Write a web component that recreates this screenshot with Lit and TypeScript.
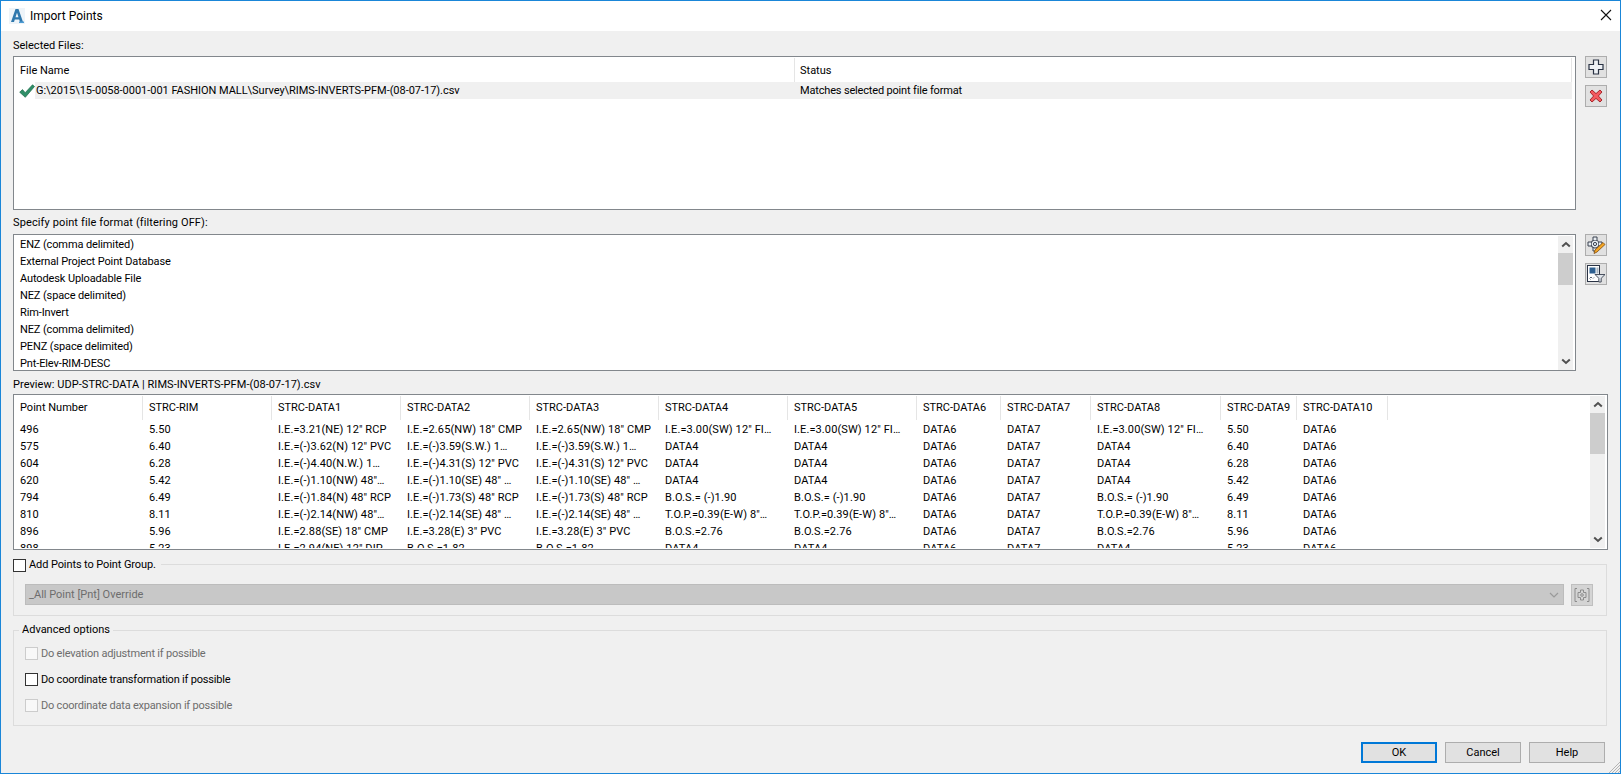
import { LitElement, html, css, svg } from "lit";
import { customElement } from "lit/decorators.js";

const COLS = [129, 129, 129, 129, 129, 129, 129, 84, 90, 130, 76, 91];
const HEAD = ["Point Number","STRC-RIM","STRC-DATA1","STRC-DATA2","STRC-DATA3","STRC-DATA4","STRC-DATA5","STRC-DATA6","STRC-DATA7","STRC-DATA8","STRC-DATA9","STRC-DATA10"];
const ROWS = [
 ["496","5.50","I.E.=3.21(NE) 12\" RCP","I.E.=2.65(NW) 18\" CMP","I.E.=2.65(NW) 18\" CMP","I.E.=3.00(SW) 12\" FI…","I.E.=3.00(SW) 12\" FI…","DATA6","DATA7","I.E.=3.00(SW) 12\" FI…","5.50","DATA6"],
 ["575","6.40","I.E.=(-)3.62(N) 12\" PVC","I.E.=(-)3.59(S.W.) 1…","I.E.=(-)3.59(S.W.) 1…","DATA4","DATA4","DATA6","DATA7","DATA4","6.40","DATA6"],
 ["604","6.28","I.E.=(-)4.40(N.W.) 1…","I.E.=(-)4.31(S) 12\" PVC","I.E.=(-)4.31(S) 12\" PVC","DATA4","DATA4","DATA6","DATA7","DATA4","6.28","DATA6"],
 ["620","5.42","I.E.=(-)1.10(NW) 48\"…","I.E.=(-)1.10(SE) 48\" …","I.E.=(-)1.10(SE) 48\" …","DATA4","DATA4","DATA6","DATA7","DATA4","5.42","DATA6"],
 ["794","6.49","I.E.=(-)1.84(N) 48\" RCP","I.E.=(-)1.73(S) 48\" RCP","I.E.=(-)1.73(S) 48\" RCP","B.O.S.= (-)1.90","B.O.S.= (-)1.90","DATA6","DATA7","B.O.S.= (-)1.90","6.49","DATA6"],
 ["810","8.11","I.E.=(-)2.14(NW) 48\"…","I.E.=(-)2.14(SE) 48\" …","I.E.=(-)2.14(SE) 48\" …","T.O.P.=0.39(E-W) 8\"…","T.O.P.=0.39(E-W) 8\"…","DATA6","DATA7","T.O.P.=0.39(E-W) 8\"…","8.11","DATA6"],
 ["896","5.96","I.E.=2.88(SE) 18\" CMP","I.E.=3.28(E) 3\" PVC","I.E.=3.28(E) 3\" PVC","B.O.S.=2.76","B.O.S.=2.76","DATA6","DATA7","B.O.S.=2.76","5.96","DATA6"],
 ["898","5.23","I.E.=2.94(NE) 12\" DIP","B.O.S.=1.82","B.O.S.=1.82","DATA4","DATA4","DATA6","DATA7","DATA4","5.23","DATA6"],
];
const FORMATS = ["ENZ (comma delimited)","External Project Point Database","Autodesk Uploadable File","NEZ (space delimited)","Rim-Invert","NEZ (comma delimited)","PENZ (space delimited)","Pnt-Elev-RIM-DESC"];

const up = svg`<svg width="10" height="7" viewBox="0 0 10 7"><path d="M1.200 5.500 5 2l3.800 3.500" fill="none" stroke="#505050" stroke-width="2"/></svg>`;
const down = svg`<svg width="10" height="7" viewBox="0 0 10 7"><path d="M1.200 1.500 5 5l3.800-3.500" fill="none" stroke="#505050" stroke-width="2"/></svg>`;

@customElement("app-root")
export class AppRoot extends LitElement {
  static styles = css`
    :host { display:block; width:1622px; height:774px; overflow:hidden; background:#fff; font-family:Roboto,"Noto Sans",sans-serif; font-size:11px; color:#000; }
    * { box-sizing:border-box; }
    .win { position:relative; width:1621px; height:774px; border:1px solid #1a86d8; display:flex; flex-direction:column; background:#f0f0f0; }
    .title { height:30px; flex:none; background:#fff; display:flex; align-items:center; padding-left:8px; font-size:12px; gap:5px; }
    .close { margin:0 8px 2px auto; display:flex; }
    .body { flex:1; display:flex; flex-direction:column; padding:0 0 0 12px; }
    .lbl { height:25px; display:flex; align-items:center; flex:none; padding-top:3px; }
    .lbl.two { height:24px; padding:1px 0 0; letter-spacing:.12px; }
    .lbl.three { height:23px; padding-top:3px; letter-spacing:.05px; }
    .rowline { display:flex; flex:none; }
    .box { background:#fff; border:1px solid #82878c; overflow:hidden; }
    .files { width:1563px; height:154px; padding:1px 3px 0 1px; }
    .fh { display:flex; height:24px; }
    .fh span { display:flex; align-items:center; padding-left:5px; border-right:1px solid #e5e5e5; height:24px; }
    .fh .a { width:780px; }
    .fh .b { width:calc(100% - 780px); }
    .fr { display:flex; height:17px; align-items:center; }
    .fr .ic { width:20px; height:17px; display:flex; justify-content:flex-end; align-items:center; background:#fff; }
    .fr .a { width:760px; height:17px; line-height:17px; background:#f0f0f0; padding-left:1px; letter-spacing:-.03px; }
    .fr .b { flex:1; height:17px; line-height:17px; background:#f0f0f0; padding-left:5px; letter-spacing:-.17px; }
    .side { display:flex; flex-direction:column; gap:7px; margin-left:9px; }
    .tb { width:22px; height:22px; background:#e1e1e1; border:1px solid #adadad; display:flex; align-items:center; justify-content:center; padding:0; }
    .tb.dis { background:#d4d4d4; border-color:#bfbfbf; }
    .formats { width:1563px; height:137px; display:flex; padding:1px 2px 0 1px; }
    .list { flex:1; overflow:hidden; padding-left:5px; letter-spacing:-.12px; }
    .list div { height:17px; line-height:17px; white-space:nowrap; }
    .sb { width:15px; flex:none; background:#f0f0f0; display:flex; flex-direction:column; }
    .sb .ar { height:17px; flex:none; display:flex; align-items:center; justify-content:center; }
    .sb .th { background:#cdcdcd; flex:none; }
    .sb .fl { flex:1; }
    .table { width:1595px; height:156px; display:flex; padding:1px 2px 1px 0; flex:none; }
    .tw { flex:1; overflow:hidden; }
    .tr { display:flex; height:17px; line-height:17px; white-space:nowrap; letter-spacing:.1px; }
    .tr.h { height:25px; line-height:24px; letter-spacing:0; }
    .tr > span { padding-left:6px; overflow:hidden; flex:none; }
    .tr.h > span { border-right:1px solid #e5e5e5; height:24px; }
    fieldset { margin:0; border:1px solid #dcdcdc; padding:0; width:1594px; flex:none; min-width:0; }
    .g1 { margin-top:7px; height:59px; }
    .g1 legend { margin-left:-1px; padding:0 5px 0 0; display:flex; align-items:center; height:15px; gap:3px; letter-spacing:-.1px; }
    .g1 legend .cb { margin-top:1px; }
    .cb { width:13px; height:13px; border:1px solid #333; background:#fff; flex:none; display:block; }
    .cb.off { border-color:#ccc; background:#f8f8f8; }
    .combo { margin:12px 0 0 11px; display:flex; align-items:center; gap:7px; height:21px; }
    .sel { width:1539px; height:21px; background:#c8c8c8; border:1px solid #bcbcbc; color:#6d6d6d; display:flex; align-items:center; padding:0 4px 0 3px; }
    .sel svg { margin-left:auto; }
    .g2 { margin-top:7px; height:103px; padding:0 0 0 11px; }
    .g2 legend { margin-left:-6px; padding:0 3px; height:14px; line-height:14px; }
    .opt { display:flex; align-items:center; gap:3px; height:14px; margin-bottom:12px; letter-spacing:-.2px; }
    .opt.off { color:#6d6d6d; }
    .opt.first { margin-top:9px; }
    .foot { display:flex; gap:8px; margin-top:16px; margin-left:1348px; flex:none; }
    .btn { width:76px; height:21px; background:#e1e1e1; border:1px solid #adadad; display:flex; align-items:center; justify-content:center; font:inherit; padding:0; color:#000; }
    .btn.def { border:2px solid #0078d7; }
    .grip { position:absolute; right:0; bottom:0; display:block; }
  `;

  render() {
    return html`<div class="win">
      <div class="title">
        <svg width="16" height="16" viewBox="0 0 16 16"><rect width="16" height="16" fill="#eef4f9"/><path d="M2 14 6.500 1h3L14 14h-3l-.8-2.500H5.800L5 14Z" fill="#2f78ad"/><path d="M6.500 9.300h3L8 4.700Z" fill="#eef4f9"/><rect x="10" y="13.500" width="5" height="1.500" fill="#4d9bd3"/></svg>
        <span>Import Points</span>
        <svg class="close" width="12" height="12" viewBox="0 0 12 12"><path d="M1 1 11 11M11 1 1 11" stroke="#111" stroke-width="1.100"/></svg>
      </div>
      <div class="body">
        <div class="lbl">Selected Files:</div>
        <div class="rowline">
          <div class="box files">
            <div class="fh"><span class="a">File Name</span><span class="b">Status</span></div>
            <div class="fr">
              <div class="ic"><svg width="16" height="14" viewBox="0 0 16 14"><path d="M.7 8.200 3.500 5.600 6.200 8.700 13.500.8l2 1.700L6.300 13.300Z" fill="#2f8f68" stroke="#1b6a49" stroke-width=".7"/></svg></div>
              <div class="a">G:\\2015\\15-0058-0001-001 FASHION MALL\\Survey\\RIMS-INVERTS-PFM-(08-07-17).csv</div>
              <div class="b">Matches selected point file format</div>
            </div>
          </div>
          <div class="side">
            <button class="tb"><svg width="16" height="16" viewBox="0 0 16 16"><path d="M5.500 1h5v4.500H15v5h-4.500V15h-5v-4.500H1v-5h4.500Z" fill="#eef1f5" stroke="#2a3344" stroke-width="1.200"/></svg></button>
            <button class="tb"><svg width="14" height="14" viewBox="0 0 14 14"><path d="M1 3 3 1l4 3.600L11 1l2 2-3.600 4L13 11l-2 2-4-3.600L3 13l-2-2 3.600-4Z" fill="#f45a5f" stroke="#a01c20" stroke-width=".9"/></svg></button>
          </div>
        </div>
        <div class="lbl two">Specify point file format (filtering OFF):</div>
        <div class="rowline">
          <div class="box formats">
            <div class="list">${FORMATS.map(f => html`<div>${f}</div>`)}</div>
            <div class="sb">
              <div class="ar">${up}</div>
              <div class="th" style="height:32px"></div>
              <div class="fl"></div>
              <div class="ar">${down}</div>
            </div>
          </div>
          <div class="side">
            <button class="tb"><svg width="20" height="20" viewBox="0 0 20 20"><circle cx="9" cy="9" r="4" fill="#e8edf2" stroke="#3a4250" stroke-width="1.200"/><circle cx="9" cy="9" r="1.600" fill="none" stroke="#3a4250"/><path d="M7 5V2h4v3M5 7H2v4h3M13 7h3v4h-3M7 13v3h3" fill="#e8edf2" stroke="#3a4250"/><path d="M8 18.500l1-3.500 8-7.500 2 2-8 7.500Z" fill="#f5a623" stroke="#7c4a10" stroke-width=".8"/></svg></button>
            <button class="tb"><svg width="20" height="20" viewBox="0 0 20 20"><rect x="1.500" y="1.500" width="12" height="16" fill="#fff" stroke="#2a3344"/><rect x="3.500" y="3.500" width="6" height="6" fill="#2d5f90"/><rect x="10.500" y="3.500" width="2" height="6" fill="#a8b4c0"/><path d="M4 13.500h2M3.500 14.500l1 1M7 14.500l1-1" stroke="#5a6472"/><path d="M9 10.500h10l-3.800 3.800V18h-2.400v-3.700Z" fill="#dfe4ea" stroke="#3a4250" stroke-width=".9"/></svg></button>
          </div>
        </div>
        <div class="lbl three">Preview: UDP-STRC-DATA | RIMS-INVERTS-PFM-(08-07-17).csv</div>
        <div class="box table">
          <div class="tw">
            <div class="tr h">${HEAD.map((h, i) => html`<span style="width:${COLS[i]}px">${h}</span>`)}</div>
            ${ROWS.map(r => html`<div class="tr">${r.map((c, i) => html`<span style="width:${COLS[i]}px">${c}</span>`)}</div>`)}
          </div>
          <div class="sb">
            <div class="ar">${up}</div>
            <div class="th" style="height:41px"></div>
            <div class="fl"></div>
            <div class="ar">${down}</div>
          </div>
        </div>
        <fieldset class="g1">
          <legend><span class="cb"></span><span>Add Points to Point Group.</span></legend>
          <div class="combo">
            <div class="sel"><span>_All Point [Pnt] Override</span>
              <svg width="10" height="6" viewBox="0 0 10 6"><path d="M1 1 5 5l4-4" fill="none" stroke="#9a9a9a" stroke-width="1.200"/></svg>
            </div>
            <button class="tb dis"><svg width="16" height="16" viewBox="0 0 16 16"><path d="M3 1.500H1v13h2M13 1.500h2v13h-2" fill="none" stroke="#8c8c8c"/><path d="M6.500 3h3v2.500H12v5H9.500V13h-3v-2.500H4v-5h2.500Z" fill="none" stroke="#8c8c8c"/><circle cx="8" cy="8" r="1.300" fill="none" stroke="#8c8c8c"/></svg></button>
          </div>
        </fieldset>
        <fieldset class="g2">
          <legend>Advanced options</legend>
          <div class="opt off first"><span class="cb off"></span>Do elevation adjustment if possible</div>
          <div class="opt"><span class="cb"></span>Do coordinate transformation if possible</div>
          <div class="opt off"><span class="cb off"></span>Do coordinate data expansion if possible</div>
        </fieldset>
        <div class="foot">
          <button class="btn def">OK</button>
          <button class="btn">Cancel</button>
          <button class="btn">Help</button>
        </div>
      </div>
      <svg class="grip" width="12" height="12" viewBox="0 0 12 12"><path d="M12 1 1 12M12 4 4 12M12 7 7 12M12 10l-2 2" stroke="#b4b4b4"/></svg>
    </div>`;
  }
}
